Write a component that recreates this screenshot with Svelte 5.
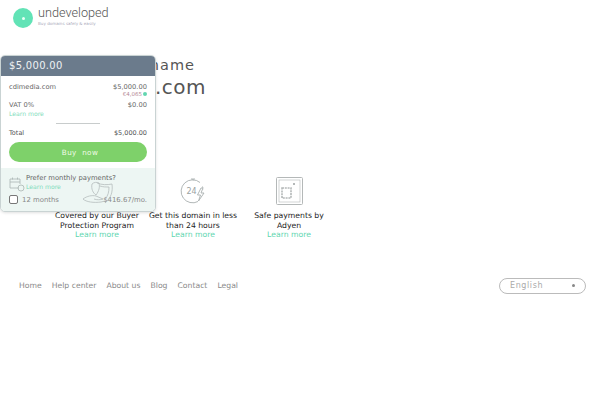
<script lang="ts">
  const features = [
    { icon: 'shield', lines: ['Covered by our Buyer', 'Protection Program'] },
    { icon: 'clock', lines: ['Get this domain in less', 'than 24 hours'] },
    { icon: 'safe', lines: ['Safe payments by', 'Adyen'] },
  ]
  const links = ['Home', 'Help center', 'About us', 'Blog', 'Contact', 'Legal']
</script>

<div class="page">
  <header class="logo">
    <span class="mark"><i></i></span>
    <div class="brand">
      <div class="word">undeveloped</div>
      <div class="tag">Buy domains safely &amp; easily</div>
    </div>
  </header>

  <section class="title">
    <div class="small">This domain name</div>
    <div class="big">cdimedia.com</div>
  </section>

  <section class="features">
    {#each features as f}
      <div class="feature">
        <div class="icon">
          {#if f.icon === 'shield'}
            <svg width="34" height="30" viewBox="0 0 34 30" fill="none" stroke="#b5bcbc" stroke-width="0.8">
              <path d="M3 23c4-3 9-4 13-3l7 3c-3 1-6 1-9 0" />
              <path d="M3 23c3 3 11 4 18 3l4-1" />
              <path d="M17 7c5 2 10 2 15 1 1 8-1 14-7 19" />
              <path d="M20 10c3 1 6 1 9 1 0 5-1 9-4 12" />
              <path d="M12 8c2-2 5-2 7-1 1 4 0 8-3 12-3-2-5-6-4-11z" />
            </svg>
          {:else if f.icon === 'clock'}
            <svg width="28" height="28" viewBox="0 0 28 28" fill="none" stroke="#a8afaf" stroke-width="0.9">
              <path d="M21 5.500A11.500 11.500 0 1 0 19 24.500" />
              <path d="M23.500 9.500l1 3" stroke-dasharray="1.500 1.500" />
              <path d="M12 2h4M14 2v1.500" />
              <path d="M22 11l-3.500 7h3l-2 6 5.500-8h-3l2-5z" />
              <text x="7.500" y="17" font-size="8" fill="#9aa2a2" stroke="none" font-family="'DejaVu Sans', sans-serif">24</text>
            </svg>
          {:else}
            <svg width="27" height="28" viewBox="0 0 27 28" fill="none" stroke="#b4b8b8">
              <rect x="0.500" y="0.500" width="26" height="27" rx="1" stroke-width="1" />
              <rect x="3" y="3" width="21" height="22" stroke-width="0.6" />
              <rect x="6" y="11" width="9" height="10" stroke-width="1.600" stroke-dasharray="2 0.800" />
              <rect x="17" y="6" width="2" height="2" fill="#b4b8b8" stroke="none" />
            </svg>
          {/if}
        </div>
        <p>{f.lines[0]}<br />{f.lines[1]}</p>
        <a href="#more">Learn more</a>
      </div>
    {/each}
  </section>

  <footer>
    <nav>
      {#each links as l}<a href="#l">{l}</a>{/each}
    </nav>
    <div class="lang"><span>English</span><b></b></div>
  </footer>

  <aside class="card">
    <div class="price">$5,000.00</div>
    <div class="body">
      <div class="row">
        <span class="name">cdimedia.com</span>
        <span class="amt">$5,000.00<small>€4,065<em></em></small></span>
      </div>
      <div class="row vat">
        <span>VAT 0%<a href="#vat">Learn more</a></span>
        <span>$0.00</span>
      </div>
      <div class="rule"></div>
      <div class="row total"><span>Total</span><span>$5,000.00</span></div>
      <button>Buy&nbsp; now</button>
    </div>
    <div class="monthly">
      <div class="prefer">
        <svg width="16" height="16" viewBox="0 0 16 16" fill="none" stroke="#aab5b3" stroke-width="0.8">
          <path d="M10 12H1V3h10v5M1 6h10M3.500 1.500v2M8.500 1.500v2" />
          <circle cx="12" cy="12" r="3" />
        </svg>
        <div>
          <div class="q">Prefer monthly payments?</div>
          <a href="#monthly">Learn more</a>
        </div>
      </div>
      <div class="months">
        <span class="box"></span>
        <span class="label">12 months</span>
        <span class="per">$416.67/mo.</span>
      </div>
    </div>
  </aside>
</div>

<style>
  :global(body) {
    margin: 0;
    background: #fff;
  }
  .page {
    position: relative;
    width: 600px;
    height: 400px;
    overflow: hidden;
    font-family: 'DejaVu Sans', sans-serif;
    color: #444;
  }
  .logo {
    display: flex;
    align-items: flex-start;
    gap: 5px;
    padding: 6px 0 0 13px;
    height: 31px;
    box-sizing: border-box;
  }
  .mark {
    width: 20px;
    height: 20px;
    margin-top: 2px;
    border-radius: 50%;
    background: #62e3b6;
    display: flex;
    align-items: center;
    justify-content: center;
  }
  .mark i {
    width: 3px;
    height: 3px;
    border-radius: 50%;
    background: #eafff7;
  }
  .word {
    font: 300 12.700px/14px Roboto, sans-serif;
    color: #555;
  }
  .tag {
    margin-top: 1px;
    font-size: 4.100px;
    line-height: 6px;
    color: #aab;
  }
  .title {
    margin-top: 25px;
    width: 206px;
    text-align: right;
    color: #555;
  }
  .small {
    font-size: 14.500px;
    line-height: 18px;
    letter-spacing: 1px;
    padding-right: 11px;
  }
  .big {
    font-size: 20px;
    line-height: 26px;
    letter-spacing: 0.5px;
  }
  .features {
    display: flex;
    margin: 75px 0 0 49px;
    position: relative;
    z-index: 2;
  }
  .feature {
    width: 96px;
    text-align: center;
    font-size: 7.700px;
    line-height: 9.500px;
    white-space: nowrap;
  }
  .icon {
    height: 31px;
    display: flex;
    align-items: center;
    justify-content: center;
  }
  .feature p {
    margin: 5px 0 0;
    color: #222;
  }
  .feature a {
    color: #62d6b0;
    text-decoration: none;
  }
  footer {
    display: flex;
    justify-content: space-between;
    align-items: center;
    margin: 38px 14px 0 19px;
  }
  nav {
    display: flex;
    gap: 10px;
  }
  nav a {
    font-size: 7.700px;
    color: #8a8a8a;
    text-decoration: none;
  }
  .lang {
    width: 87px;
    height: 16px;
    box-sizing: border-box;
    padding: 0 10px;
    border: 1px solid #bbb;
    border-radius: 8px;
    display: flex;
    align-items: center;
    justify-content: space-between;
    font-size: 8px;
    letter-spacing: 0.6px;
    color: #aaa;
  }
  .lang b {
    width: 3px;
    height: 3px;
    border-radius: 50%;
    background: #888;
  }
  .card {
    position: absolute;
    left: 0;
    top: 55px;
    width: 156px;
    height: 157px;
    box-sizing: border-box;
    border: 1px solid #c9d3d3;
    border-radius: 5px;
    background: #fff;
    overflow: hidden;
    display: flex;
    flex-direction: column;
    box-shadow: 0 1px 3px rgba(0, 0, 0, 0.12);
    z-index: 1;
    font-size: 6.700px;
    color: #666;
  }
  .price {
    height: 20px;
    background: #6b7b8c;
    color: #eef2f4;
    font-size: 10px;
    line-height: 20px;
    padding-left: 8px;
    letter-spacing: 0.3px;
  }
  .body {
    flex: 1;
    padding: 7px 8px 0;
  }
  .row {
    display: flex;
    justify-content: space-between;
    line-height: 8px;
  }
  .amt {
    text-align: right;
  }
  .amt small {
    display: flex;
    align-items: center;
    justify-content: flex-end;
    gap: 1px;
    font-size: 5.500px;
    line-height: 6px;
    color: #b58a96;
  }
  .amt em {
    width: 4px;
    height: 4px;
    border-radius: 50%;
    background: #62d6b0;
  }
  .vat {
    margin-top: 4px;
  }
  .vat a,
  .prefer a {
    display: block;
    font-size: 6.100px;
    line-height: 9px;
    color: #7fdcbc;
    text-decoration: none;
  }
  .rule {
    width: 44px;
    height: 1px;
    background: #c8cccc;
    margin: 5px auto 5px;
  }
  .total {
    font-size: 6.500px;
    color: #555;
  }
  button {
    display: block;
    width: 100%;
    height: 20px;
    margin-top: 5px;
    padding: 0 0 0 4px;
    border: 0;
    border-radius: 10px;
    background: #7ed16a;
    color: #f2fbe9;
    font: 7.200px 'DejaVu Sans', sans-serif;
    letter-spacing: 0.4px;
  }
  .monthly {
    height: 43px;
    box-sizing: border-box;
    background: #edf6f3;
    padding: 6px 8px 0;
  }
  .prefer {
    display: flex;
    gap: 1px;
  }
  .q {
    font-size: 6.800px;
    line-height: 8px;
    color: #666;
  }
  .prefer svg {
    margin-top: 2px;
  }
  .months {
    display: flex;
    align-items: center;
    margin-top: 3px;
    font-size: 6.900px;
    color: #888;
  }
  .box {
    width: 7px;
    height: 7px;
    border: 1px solid #777;
    border-radius: 2px;
    background: #fff;
    margin-right: 4px;
  }
  .per {
    margin-left: auto;
  }
</style>
